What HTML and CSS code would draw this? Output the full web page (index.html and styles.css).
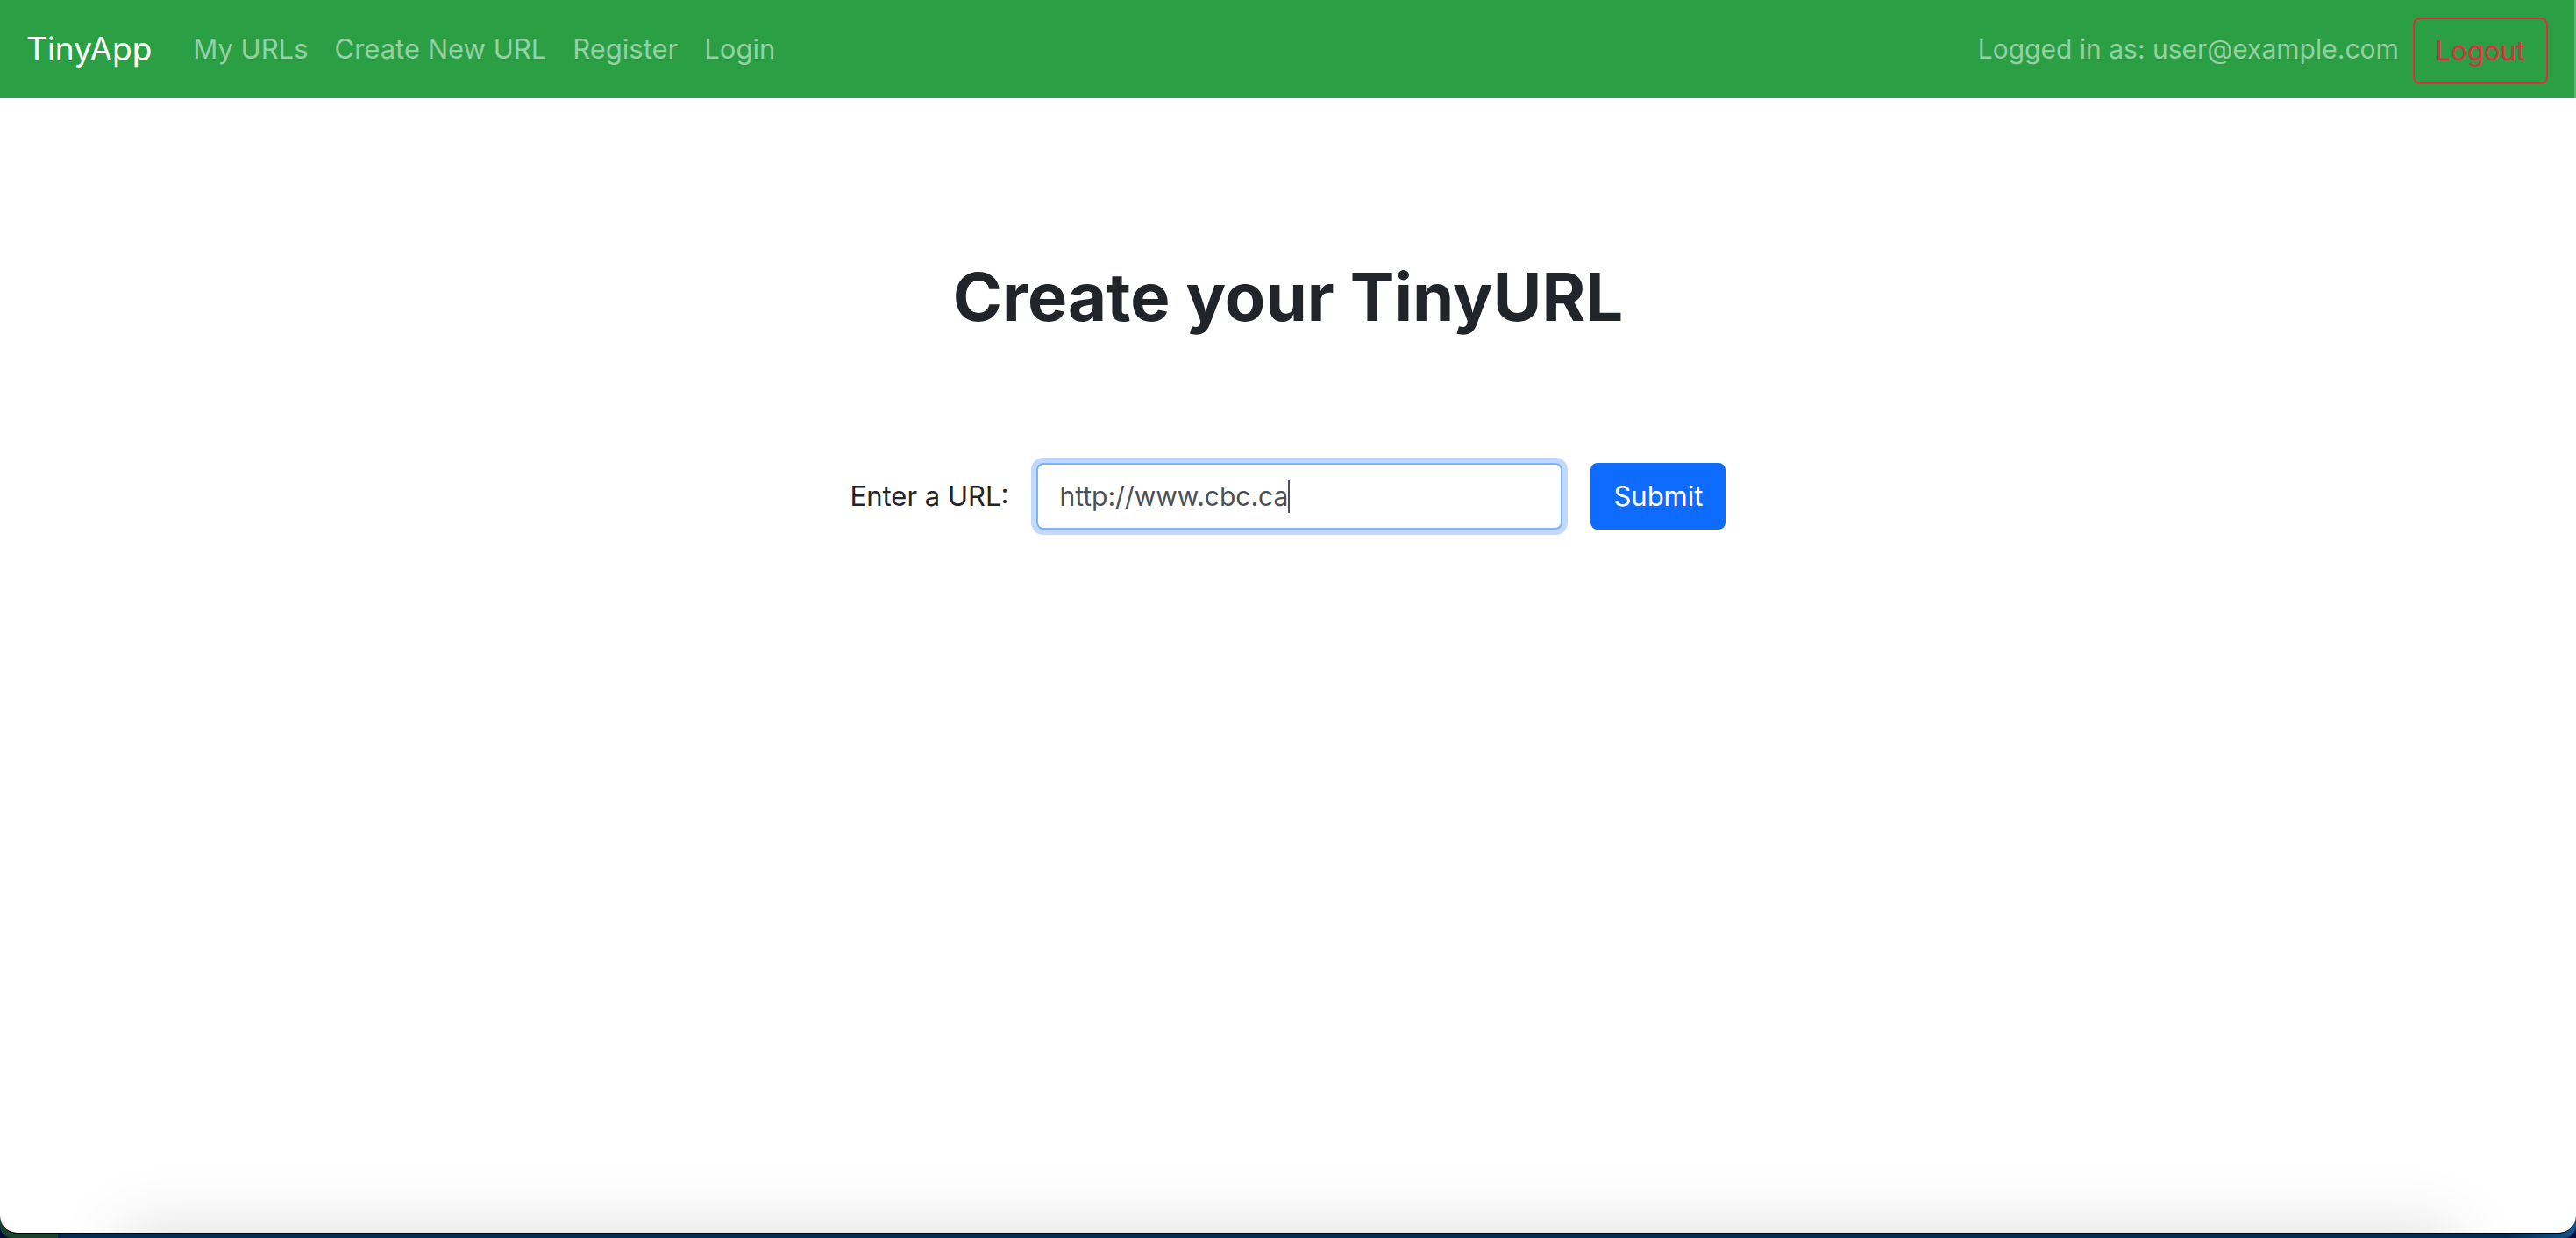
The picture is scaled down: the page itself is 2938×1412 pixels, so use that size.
FILE: index.html
```html
<!DOCTYPE html>
<html lang="en">
<head>
<meta charset="utf-8">
<title>TinyApp</title>
<link rel="stylesheet" href="styles.css">
</head>
<body>
<div class="window">
  <header class="navbar">
    <a class="brand" href="#">TinyApp</a>
    <nav class="links">
      <a class="nav-link" href="#">My URLs</a>
      <a class="nav-link" href="#">Create New URL</a>
      <a class="nav-link" href="#">Register</a>
      <a class="nav-link" href="#">Login</a>
    </nav>
    <form class="session">
      <span class="user">Logged in as: user@example.com</span>
      <button class="btn btn-logout" type="submit">Logout</button>
    </form>
  </header>
  <main class="content">
    <h1 class="title">Create your TinyURL</h1>
    <form class="url-form">
      <label class="label" for="longURL">Enter a URL:</label>
      <div class="field">
        <input class="input" id="longURL" name="longURL" type="text" value="http://www.cbc.ca">
        <span class="caret"></span>
      </div>
      <button class="btn btn-submit" type="submit">Submit</button>
    </form>
  </main>
  <div class="shade"></div>
</div>
</body>
</html>
```
FILE: styles.css
```css
* {
  box-sizing: border-box;
}

html {
  background: #03083a;
}

body {
  margin: 0;
  min-height: 100vh;
  display: flex;
  flex-direction: column;
  padding-bottom: 5px;
  border-radius: 0 0 14px 14px;
  background:
    linear-gradient(90deg, #14432e 66px, transparent 66px),
    linear-gradient(270deg, #0f5590, #022c54 80px);
  color: #212529;
  font-family: Inter, "Liberation Sans", sans-serif;
  font-size: 31px;
  line-height: 48px;
}

.window {
  flex: 1;
  display: flex;
  flex-direction: column;
  overflow: hidden;
  border-bottom: 1px solid #000;
  border-radius: 0 0 20px 20px;
  background: #fff;
}

.navbar {
  display: flex;
  align-items: center;
  min-height: 112px;
  padding: 16px 30px;
  border-right: 2px solid #5fb673;
  background: #2b9f44;
}

.brand {
  margin-right: 32px;
  color: #fff;
  font-size: 37px;
  text-decoration: none;
}

.links {
  display: flex;
  flex: 1;
}

.nav-link {
  padding: 0 15px;
  color: #95cfa2;
  text-decoration: none;
}

.session {
  display: flex;
  align-items: center;
  gap: 16px;
}

.user {
  color: #95cfa2;
  font-size: 30px;
}

.btn {
  height: 76px;
  padding: 0 24px;
  border: 2px solid;
  border-radius: 8px;
  font: inherit;
}

.btn-logout {
  margin-top: 4px;
  border-color: #dc2f3f;
  background: transparent;
  color: #dc2f3f;
}

.content {
  flex: 1;
  display: flex;
  flex-direction: column;
  align-items: center;
  padding-top: 178px;
}

.title {
  margin: 0 0 142px;
  font-size: 76px;
  font-weight: 700;
  line-height: 96px;
}

.url-form {
  display: flex;
  align-items: center;
  gap: 32px;
}

.field {
  position: relative;
}

.input {
  display: block;
  width: 600px;
  height: 76px;
  padding: 0 24px;
  border: 2px solid #7ab4fc;
  border-radius: 8px;
  outline: none;
  box-shadow: 0 0 0 6px #c1d8ff;
  background: #fff;
  color: #495057;
  font: inherit;
  font-size: 30px;
}

.caret {
  position: absolute;
  top: 19px;
  left: 287px;
  width: 2px;
  height: 38px;
  background: #495057;
}

.btn-submit {
  border-color: #0d6bfe;
  background: #0d6bfe;
  color: #fff;
}

/* soft shadow rising from below the bottom edge */
.shade {
  height: 100px;
  margin: 0 140px -100px;
  box-shadow: 0 0 80px rgba(0, 0, 0, 0.15);
}
```
